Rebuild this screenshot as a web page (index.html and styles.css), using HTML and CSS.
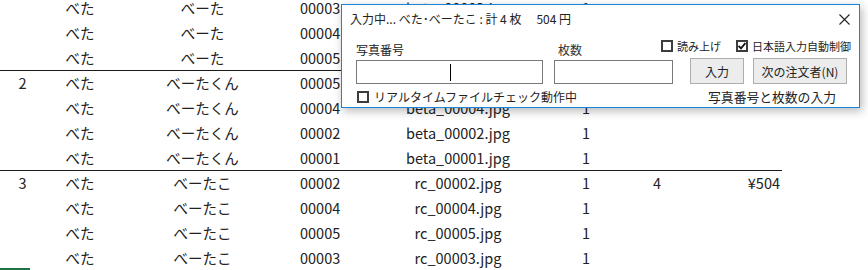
FILE: index.html
```html
<!DOCTYPE html>
<html lang="ja">
<head>
<meta charset="UTF-8">
<meta name="viewport" content="width=device-width, initial-scale=1.0">
<title>注文入力</title>
<link rel="stylesheet" href="styles.css">
</head>
<body>
<table class="orders">
    <colgroup>
        <col class="c-no"><col class="c-name"><col class="c-kana"><col class="c-code">
        <col class="c-file"><col class="c-qty"><col class="c-count"><col class="c-price">
    </colgroup>
    <tbody>
        <tr><td></td><td>べた</td><td>べーた</td><td class="code">00003</td><td>beta_00003.jpg</td><td>1</td><td></td><td></td></tr>
        <tr><td></td><td>べた</td><td>べーた</td><td class="code">00004</td><td>beta_00004.jpg</td><td>1</td><td></td><td></td></tr>
        <tr><td></td><td>べた</td><td>べーた</td><td class="code">00005</td><td>beta_00005.jpg</td><td>1</td><td></td><td></td></tr>
        <tr class="group-start"><td>2</td><td>べた</td><td>べーたくん</td><td class="code">00005</td><td>beta_00005.jpg</td><td>1</td><td>4</td><td class="price">¥504</td></tr>
        <tr><td></td><td>べた</td><td>べーたくん</td><td class="code">00004</td><td>beta_00004.jpg</td><td>1</td><td></td><td></td></tr>
        <tr><td></td><td>べた</td><td>べーたくん</td><td class="code">00002</td><td>beta_00002.jpg</td><td>1</td><td></td><td></td></tr>
        <tr><td></td><td>べた</td><td>べーたくん</td><td class="code">00001</td><td>beta_00001.jpg</td><td>1</td><td></td><td></td></tr>
        <tr class="group-start"><td>3</td><td>べた</td><td>べーたこ</td><td class="code">00002</td><td>rc_00002.jpg</td><td>1</td><td>4</td><td class="price">¥504</td></tr>
        <tr><td></td><td>べた</td><td>べーたこ</td><td class="code">00004</td><td>rc_00004.jpg</td><td>1</td><td></td><td></td></tr>
        <tr><td></td><td>べた</td><td>べーたこ</td><td class="code">00005</td><td>rc_00005.jpg</td><td>1</td><td></td><td></td></tr>
        <tr><td></td><td>べた</td><td>べーたこ</td><td class="code">00003</td><td>rc_00003.jpg</td><td>1</td><td></td><td></td></tr>
    </tbody>
</table>
<div class="sheet-tab"></div>

<div class="dialog">
    <div class="title-bar">
        <span class="title">入力中... べた･べーたこ : 計 4 枚<span class="title-sum">504 円</span></span>
        <svg class="close" width="11" height="11" viewBox="0 0 11 11">
            <path d="M0.5 0.5 L10.5 10.5 M10.5 0.5 L0.5 10.5" stroke="#222" stroke-width="1.1" fill="none"/>
        </svg>
    </div>

    <div class="field-labels">
        <span class="lbl-photo">写真番号</span>
        <span class="lbl-qty">枚数</span>
        <div class="options">
            <label class="check"><span class="box"></span>読み上げ</label>
            <label class="check">
                <span class="box">
                    <svg width="8" height="8" viewBox="0 0 8 8"><path d="M0.6 4 L3 6.4 L7.4 1" stroke="#111" stroke-width="1.8" fill="none"/></svg>
                </span>日本語入力自動制御
            </label>
        </div>
    </div>

    <div class="entry-row">
        <div class="input input-photo"><span class="caret"></span></div>
        <div class="input input-qty"></div>
        <div class="buttons">
            <button class="btn btn-enter">入力</button>
            <button class="btn btn-next">次の注文者(N)</button>
        </div>
    </div>

    <div class="bottom-row">
        <label class="check check-realtime"><span class="box"></span>リアルタイムファイルチェック動作中</label>
        <span class="hint">写真番号と枚数の入力</span>
    </div>
</div>
</body>
</html>
```

FILE: styles.css
```css
body {
    margin: 0;
    background-color: #fff;
    color: #222;
    font-family: "Noto Sans CJK JP", "Noto Sans", sans-serif;
    overflow: hidden;
}

.orders {
    border-collapse: collapse;
    table-layout: fixed;
    width: 782px;
    margin-top: -5px;
    font-size: 14.5px;
}

.orders td {
    height: 25px;
    padding: 0;
    line-height: 24px;
    text-align: center;
    white-space: nowrap;
}

.c-no { width: 45px; }
.c-name { width: 70px; }
.c-kana { width: 175px; }
.c-code { width: 90px; }
.c-file { width: 156px; }
.c-qty { width: 100px; }
.c-count { width: 42px; }
.c-price { width: 104px; }

.orders td.code {
    text-align: left;
    padding-left: 10px;
}

.orders td.price {
    text-align: right;
    padding-right: 2px;
}

.orders .group-start td {
    height: 24px;
    border-top: 1px solid #1a1a1a;
}

.sheet-tab {
    width: 30px;
    margin-top: -2px;
    border-top: 2px solid #217346;
}

/* 入力ダイアログ */
.dialog {
    position: absolute;
    left: 341px;
    top: 4px;
    width: 517px;
    height: 102px;
    border: 1px solid #1883d7;
    background-color: #fff;
    box-shadow: 2px 3px 9px rgba(0, 0, 0, 0.28);
    font-size: 12px;
    color: #222;
}

.title-bar {
    display: flex;
    justify-content: space-between;
    align-items: center;
    height: 16px;
    padding: 6px 9px 0 8px;
    line-height: 16px;
}

.title-sum {
    margin-left: 15px;
}

.field-labels {
    display: flex;
    height: 18px;
    margin: 13px 8px 0 14px;
}

.lbl-photo {
    width: 198px;
    align-self: flex-end;
    line-height: 16px;
}

.lbl-qty {
    flex: 1;
    padding-left: 4px;
    align-self: flex-end;
    line-height: 16px;
    color: #333;
}

.options {
    display: flex;
    gap: 15px;
    align-items: flex-start;
    font-size: 11px;
}

.check {
    display: flex;
    align-items: center;
    gap: 4px;
    line-height: 12px;
}

.box {
    display: flex;
    align-items: center;
    justify-content: center;
    width: 8px;
    height: 8px;
    border: 2px solid #3c3c3c;
    background-color: #fff;
    flex-shrink: 0;
}

.entry-row {
    display: flex;
    align-items: flex-end;
    margin: 0 12px 0 14px;
    height: 26px;
}

.input {
    height: 22px;
    border: 1px solid #7a7a7a;
    background-color: #fff;
}

.input-photo {
    width: 185px;
    margin-right: 11px;
    display: flex;
    align-items: center;
}

.input-qty {
    width: 117px;
}

.caret {
    width: 1px;
    height: 17px;
    margin-left: 93px;
    background-color: #000;
}

.buttons {
    display: flex;
    gap: 9px;
    margin-left: 17px;
}

.btn {
    height: 26px;
    padding: 0;
    border: 1px solid #adadad;
    background-color: #ececec;
    font-family: inherit;
    font-size: 12px;
    color: #222;
}

.btn-enter { width: 54px; }
.btn-next { width: 94px; }

.bottom-row {
    display: flex;
    justify-content: space-between;
    align-items: center;
    margin: 6px 23px 0 15px;
}

.check-realtime {
    font-size: 12px;
    gap: 5px;
}

.hint {
    font-size: 12.8px;
    line-height: 14px;
}
```
